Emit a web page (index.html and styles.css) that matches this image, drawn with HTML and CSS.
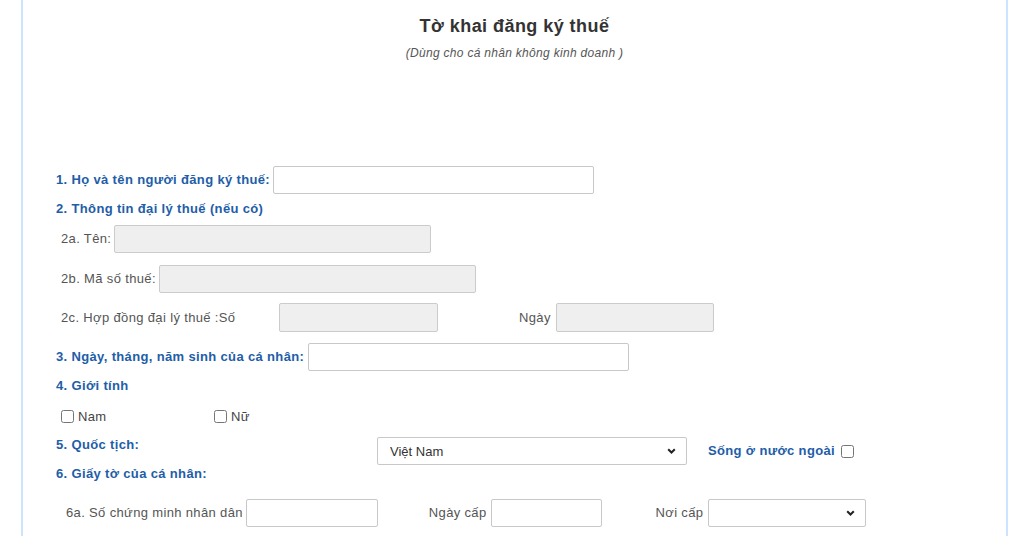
FILE: index.html
```html
<!DOCTYPE html>
<html lang="vi">
<head>
<meta charset="utf-8">
<title>Tờ khai đăng ký thuế</title>
<link rel="stylesheet" href="styles.css">
</head>
<body>
<div class="page">
  <header class="head">
    <h1 class="title">Tờ khai đăng ký thuế</h1>
    <p class="subtitle">(Dùng cho cá nhân không kinh doanh )</p>
  </header>
  <form class="form">
    <div class="row r1">
      <label class="lbl-main">1. Họ và tên người đăng ký thuế:</label>
      <input class="field w321" type="text">
    </div>
    <div class="row r2">
      <span class="lbl-main">2. Thông tin đại lý thuế (nếu có)</span>
    </div>
    <div class="row r2a sub">
      <label class="lbl">2a. Tên:</label>
      <input class="field dis w317" type="text" disabled>
    </div>
    <div class="row r2b sub">
      <label class="lbl">2b. Mã số thuế:</label>
      <input class="field dis w317" type="text" disabled>
    </div>
    <div class="row r2c sub">
      <label class="lbl lbl-2c">2c. Hợp đồng đại lý thuế :Số</label>
      <input class="field dis w159" type="text" disabled>
      <label class="lbl lbl-ngay">Ngày</label>
      <input class="field dis w158" type="text" disabled>
    </div>
    <div class="row r3">
      <label class="lbl-main">3. Ngày, tháng, năm sinh của cá nhân:</label>
      <input class="field w321 f3" type="text">
    </div>
    <div class="row r4">
      <span class="lbl-main">4. Giới tính</span>
    </div>
    <div class="row r4c sub">
      <label class="check check-nam"><input type="checkbox" class="cb"><span>Nam</span></label>
      <label class="check"><input type="checkbox" class="cb"><span>Nữ</span></label>
    </div>
    <div class="row r5">
      <span class="lbl-main lbl-5">5. Quốc tịch:</span>
      <span class="sel-wrap w310">
        <select class="sel"><option>Việt Nam</option></select>
        <svg class="chev" width="9" height="6" viewBox="0 0 9 6"><path d="M1.2 1.2l3.3 3.3 3.3-3.3" fill="none" stroke="#222" stroke-width="2"/></svg>
      </span>
      <span class="lbl-main lbl-abroad">Sống ở nước ngoài</span>
      <input type="checkbox" class="cb cb-abroad">
    </div>
    <div class="row r6">
      <span class="lbl-main">6. Giấy tờ của cá nhân:</span>
    </div>
    <div class="row r6a sub2">
      <label class="lbl">6a. Số chứng minh nhân dân</label>
      <input class="field w132" type="text">
      <label class="lbl lbl-ngaycap">Ngày cấp</label>
      <input class="field w111 f-ngaycap" type="text">
      <label class="lbl lbl-noicap">Nơi cấp</label>
      <span class="sel-wrap w158">
        <select class="sel"><option></option></select>
        <svg class="chev" width="9" height="6" viewBox="0 0 9 6"><path d="M1.2 1.2l3.3 3.3 3.3-3.3" fill="none" stroke="#222" stroke-width="2"/></svg>
      </span>
    </div>
  </form>
</div>
</body>
</html>
```

FILE: styles.css
```css
* { box-sizing: border-box; }
html, body { margin: 0; padding: 0; background: #fff; }
body {
  font-family: "Liberation Sans", Arial, sans-serif;
  font-size: 13px;
  letter-spacing: 0.35px;
  color: #444;
}
.page {
  margin-left: 21px;
  width: 987px;
  min-height: 536px;
  border-left: 2px solid #cce4fd;
  border-right: 2px solid #cce4fd;
}
.head {
  text-align: center;
  padding-top: 15px;
  height: 166px;
}
.title {
  margin: 0;
  font-size: 18px;
  line-height: 22px;
  letter-spacing: 0.45px;
  font-weight: bold;
  color: #333;
}
.subtitle {
  margin: 9px 0 0;
  font-size: 12px;
  line-height: 14px;
  letter-spacing: 0.3px;
  font-style: italic;
  color: #555;
}
.form { padding-left: 33px; }
.row {
  display: flex;
  align-items: center;
}
.sub { padding-left: 5px; }
.sub2 { padding-left: 10px; }
.lbl-main {
  font-weight: bold;
  color: #225da8;
  line-height: 16px;
}
.lbl { color: #555; line-height: 16px; }
.field {
  height: 28px;
  border: 1px solid #c8c8c8;
  border-radius: 2px;
  background: #fff;
  margin: 0 0 0 3px;
  padding: 0 8px;
  font: inherit;
}
.field.dis { background: #efefef; border-color: #cbcbcb; }
.w321 { width: 321px; }
.w317 { width: 317px; }
.w159 { width: 159px; }
.w158 { width: 158px; }
.w132 { width: 132px; }
.w111 { width: 111px; }
.w310 { width: 310px; }

.r1 { height: 28px; }
.r2 { height: 30px; }
.r2a { margin-top: 1px; height: 28px; }
.r2b { margin-top: 12px; height: 28px; }
.r2c { margin-top: 10px; height: 29px; }
.r2c .field { height: 29px; }
.lbl-2c { width: 215px; }
.lbl-ngay { margin-left: 81px; }
.lbl-ngay + .field { margin-left: 5px; }
.r3 { margin-top: 11px; height: 28px; }
.r3 .f3 { margin-left: 4px; }
.r4 { height: 29px; }
.r4c { height: 32px; }
.check {
  display: flex;
  align-items: center;
  color: #444;
}
.check-nam { width: 153px; }
.cb {
  width: 13px;
  height: 13px;
  margin: 0 4px 0 0;
}
.r5 { margin-top: 5px; height: 28px; align-items: flex-start; }
.lbl-5 { width: 321px; }
.sel-wrap {
  position: relative;
  display: block;
  height: 28px;
}
.sel {
  appearance: none;
  -webkit-appearance: none;
  width: 100%;
  height: 28px;
  border: 1px solid #c8c8c8;
  border-radius: 2px;
  background: #fff;
  padding: 0 24px 0 12px;
  font: inherit;
  color: #333;
}
.chev {
  position: absolute;
  right: 11px;
  top: 11px;
}
.lbl-abroad { align-self: center; margin-left: 21px; }
.cb-abroad { align-self: center; margin-left: 6px; }
.r6 { height: 18px; }
.r6a { margin-top: 16px; height: 28px; }
.r6a .field { margin-left: 3px; }
.lbl-ngaycap { margin-left: 51px; }
.r6a .f-ngaycap { margin-left: 4px; }
.lbl-noicap { margin-left: 54px; }
.lbl-noicap + .sel-wrap { margin-left: 5px; }
```
